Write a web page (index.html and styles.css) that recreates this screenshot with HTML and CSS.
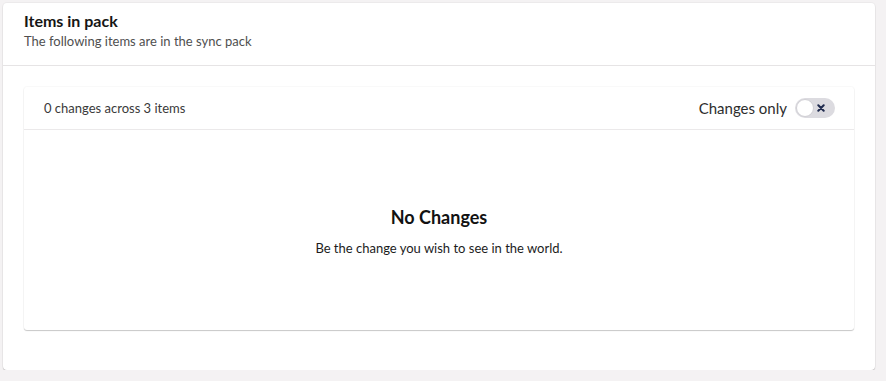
FILE: index.html
```html
<!DOCTYPE html>
<html>
<head>
<meta charset="utf-8">
<link rel="stylesheet" href="styles.css">
</head>
<body>
<div class="card">
  <div class="card-header">
    <div class="title">Items in pack</div>
    <div class="subtitle">The following items are in the sync pack</div>
  </div>
  <div class="card-body">
    <div class="inner">
      <div class="inner-head">
        <span class="count">0 changes across 3 items</span>
        <label class="toggle-wrap">
          <span class="toggle-label">Changes only</span>
          <span class="toggle">
            <span class="knob"></span>
            <svg class="x" width="8" height="8" viewBox="0 0 8 8"><path d="M1.3 1.3 L6.7 6.7 M6.7 1.3 L1.3 6.7" stroke="#1f2a4e" stroke-width="2" stroke-linecap="round"/></svg>
          </span>
        </label>
      </div>
      <div class="empty">
        <div class="empty-title">No Changes</div>
        <div class="empty-text">Be the change you wish to see in the world.</div>
      </div>
    </div>
  </div>
</div>
</body>
</html>
```
FILE: styles.css
```css
html, body {
  margin: 0;
  background: #f4f2f3;
}
body {
  padding: 3px 11px 0 3px;
  font-family: Lato, "Liberation Sans", sans-serif;
  color: #1b1b1b;
}
.card {
  background: #fff;
  border-radius: 4px;
  box-shadow: 0 1px 1px rgba(0,0,0,0.2), 0 0 0 1px rgba(0,0,0,0.03);
}
.card-header {
  height: 63px;
  box-sizing: border-box;
  padding: 8px 21px 0 21px;
  border-bottom: 1px solid #e6e4e5;
}
.title {
  font-size: 16px;
  font-weight: 700;
  line-height: 20px;
  color: #161616;
}
.subtitle {
  font-size: 13px;
  line-height: 17px;
  margin-top: 2px;
  color: #4f4f4f;
}
.card-body {
  padding: 21px 21px 40px 21px;
}
.inner {
  border-radius: 3px;
  box-shadow: 0 1px 1px rgba(0,0,0,0.2), 0 0 0 1px rgba(0,0,0,0.025);
}
.inner-head {
  height: 42px;
  padding: 0 19px 0 20px;
  display: flex;
  align-items: center;
  justify-content: space-between;
  border-bottom: 1px solid #ebe9ea;
}
.count {
  font-size: 13px;
  color: #3a3a3a;
}
.toggle-wrap {
  display: flex;
  align-items: center;
  gap: 8px;
}
.toggle-label {
  font-size: 15px;
  color: #2d2d2d;
}
.toggle {
  position: relative;
  width: 40px;
  height: 20px;
  border-radius: 10px;
  background: #dcdbe0;
  display: block;
}
.knob {
  position: absolute;
  left: 1px;
  top: 1px;
  width: 16px;
  height: 16px;
  border-radius: 50%;
  background: #fff;
  border: 1px solid #d0cfd4;
}
.x {
  position: absolute;
  right: 10px;
  top: 6px;
}
.empty {
  height: 200px;
  display: flex;
  flex-direction: column;
  align-items: center;
  padding-top: 76px;
  box-sizing: border-box;
}
.empty-title {
  font-size: 18px;
  font-weight: 700;
  line-height: 22px;
  color: #121212;
}
.empty-text {
  font-size: 13px;
  line-height: 16px;
  margin-top: 12px;
  color: #1c1c1c;
}
```
